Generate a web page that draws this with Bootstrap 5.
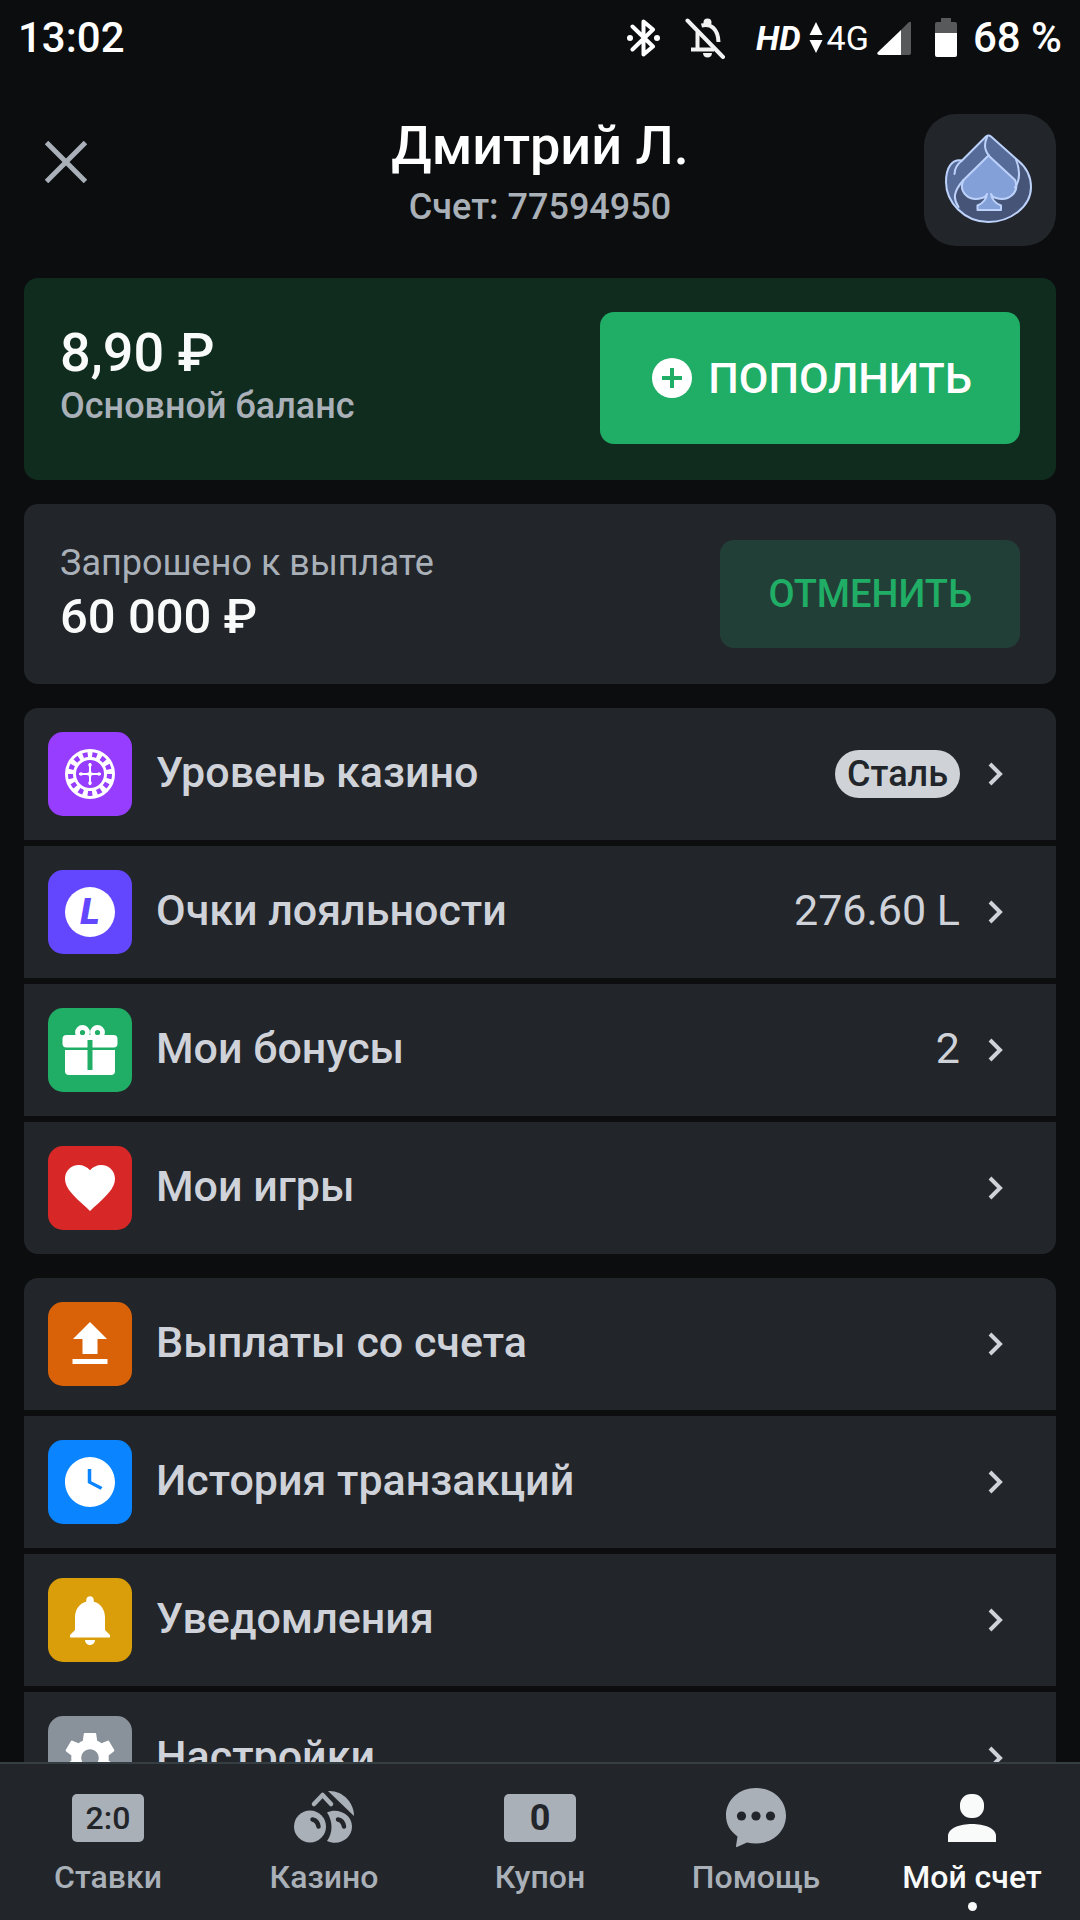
<!DOCTYPE html>
<html lang="ru" data-bs-theme="dark">
<head>
<meta charset="utf-8">
<meta name="viewport" content="width=device-width, initial-scale=1">
<title>Мой счет</title>
<link href="https://cdn.jsdelivr.net/npm/bootstrap@5.3.0/dist/css/bootstrap.min.css" rel="stylesheet">
<style>
  :root { --page: #0b0d0e; --panel: #22252a; --muted: #a9b0b8; --soft: #cfd3d9; --bright: #f9fbfa; --accent: #20ad65; }
  body { font-family: Roboto, "Noto Sans", sans-serif; background: var(--page); color: var(--bright); font-weight: 500; }
  svg { display: block; flex: none; }
  .text-dim { color: var(--muted); }
  .fs-title { font-size: 54px; line-height: 64px; }
  .fs-sum { font-size: 49px; line-height: 58px; }
  .fs-sub { font-size: 36px; line-height: 42px; }

  .status-bar { height: 76px; padding: 0 18px; font-size: 42px; line-height: 48px; color: #fff; }
  .status-small { font-size: 34px; line-height: 36px; }
  .status-net { margin-left: 30px; }

  .profile-head { padding: 38px 24px 32px; }
  .close-btn { width: 84px; height: 96px; }
  .side-slot { width: 132px; }
  .avatar-tile { width: 132px; height: 132px; border-radius: 32px; background: var(--panel); }

  .content-col { padding: 0 24px; gap: 24px; overflow-y: auto; scrollbar-width: none; min-height: 0; }
  .content-col::-webkit-scrollbar { display: none; }
  .content-col > * { flex: none; }
  .panel-card { background: var(--panel); border-radius: 14px; padding: 36px; }
  .panel-balance { background: #102c1f; padding-top: 34px; }
  .balance-text { padding-bottom: 8px; }
  .btn-deposit, .btn-cancel { border: 0; border-radius: 14px; font-weight: 500; padding: 0 48px; }
  .btn-deposit, .btn-deposit:hover { background: var(--accent); color: #fff; height: 132px; font-size: 43px; gap: 12px; }
  .btn-cancel, .btn-cancel:hover { background: #223f37; color: var(--accent); height: 108px; font-size: 38px; }

  .menu-list { gap: 6px; border-radius: 14px; overflow: hidden; }
  .menu-row { background: var(--panel); color: var(--soft); height: 132px; padding: 0 48px 0 24px; font-size: 43px; line-height: 48px; }
  .menu-row:hover { color: var(--soft); }
  .menu-icon { border-radius: 15px; margin-right: 24px; }
  .menu-label, .menu-value { padding-bottom: 4px; }
  .menu-value { font-weight: 400; }
  .level-pill { background: #cfd3d8; color: var(--panel); font-size: 36px; line-height: 48px; font-weight: 500; padding: 0 12px; border-radius: 24px; }
  .chev { margin-left: 24px; }
  .bg-violet { background: #963dff; } .bg-indigo { background: #6347ff; } .bg-green { background: #20ad65; } .bg-red { background: #d82727; }
  .bg-orange { background: #d96208; } .bg-azure { background: #0a84ff; } .bg-amber { background: #d99e0a; } .bg-steel { background: #89919a; }

  .tab-bar { background: var(--panel); border-top: 2px solid #353e42; padding-top: 24px; height: 158px; }
  .tab-link { color: var(--muted); font-size: 32px; line-height: 40px; flex: 1 1 0; }
  .tab-link.active { color: var(--bright); }
  .tab-pic { height: 60px; margin-bottom: 9px; }
  .tab-chip { width: 72px; height: 48px; border-radius: 5px; background: var(--muted); color: var(--panel); line-height: 48px; text-align: center; }
  .chip-score { font-size: 32px; }
  .chip-count { font-size: 36px; font-weight: 700; }
  .tab-dot { width: 9px; height: 9px; border-radius: 50%; background: var(--bright); margin-top: 5px; }
</style>
</head>
<body>
<div class="vh-100 d-flex flex-column overflow-hidden">
  <div class="status-bar d-flex align-items-center flex-shrink-0">
    <span class="me-auto">13:02</span>
    <svg class="me-4" width="33" height="38" viewBox="0 0 33 38" fill="none" stroke="#fff" stroke-width="4" stroke-linejoin="round" stroke-linecap="round"><path d="M5.500 7.500 26 27.500 16.500 35.500V2.500L26 10.500 5.500 30.500"/><circle cx="3" cy="19" r="3" fill="#fff" stroke="none"/><circle cx="30" cy="19" r="3" fill="#fff" stroke="none"/></svg>
    <svg width="42" height="42" viewBox="0 0 42 42" fill="none" stroke="#f2f2f2" stroke-width="4"><path d="M3.500 3.500 39 40" stroke-linecap="round"/><path d="M13.500 15v17.500M7 32.500h23M17.500 8.500C27 6 34 12 34.500 25"/><circle cx="23.500" cy="5.500" r="4" fill="#f2f2f2" stroke="none"/><path d="M19 36h9c0 6-9 6-9 0z" fill="#f2f2f2" stroke="none"/></svg>
    <span class="status-small status-net fst-italic fw-bold">HD</span>
    <svg class="ms-2" width="14" height="34" viewBox="0 0 14 34" fill="#fff"><path d="M7 1l6.500 13H.5zM.500 19h13L7 32z"/></svg>
    <span class="status-small fw-normal ms-1">4G</span>
    <svg class="ms-2" width="34" height="36" viewBox="0 0 34 36"><path d="M24 10 32 2q2-1 2 1v30q0 2-2 2h-8z" fill="#58595b"/><path d="M24 10v25H2q-3-1-1-3z" fill="#fff"/></svg>
    <svg class="ms-4" width="22" height="40" viewBox="0 0 22 40"><path d="M6 0h10v4h4q2 0 2 2v10H0V6q0-2 2-2h4z" fill="#58595b"/><path d="M0 15h22v22q0 2-2 2H2q-2 0-2-2z" fill="#fff"/></svg>
    <span class="ms-3">68 %</span>
  </div>

  <header class="profile-head d-flex align-items-start flex-shrink-0">
    <div class="side-slot">
      <button type="button" class="close-btn btn p-0 border-0 d-flex align-items-center justify-content-center" aria-label="Закрыть">
        <svg width="42" height="42" viewBox="0 0 42 42" stroke="#a9b0b8" stroke-width="5"><path d="M1.500 1.500l39 39M40.500 1.500l-39 39"/></svg>
      </button>
    </div>
    <div class="flex-grow-1 text-center">
      <h1 class="fs-title mb-2">Дмитрий Л.</h1>
      <div class="fs-sub text-dim">Счет: 77594950</div>
    </div>
    <a href="#" class="avatar-tile d-block" aria-label="Профиль">
      <svg width="132" height="132" viewBox="0 0 132 132" fill="none" stroke="#bdd2fb" stroke-width="2" stroke-linejoin="round" stroke-linecap="round">
        <path d="M62 22.500q2.500-2 5 0L94 46.500C103 54 107 64 107 73 107 93 86 108 64.500 108 40 108 22 88 22 68 22 53 28 45 38 46.500z" fill="#566b97" stroke="none"/>
        <path d="M37.500 67C30 78 30 85 34.500 93 42 103 53 108 64.500 108 86 108 107 93 107 73 107 62 101 52 92 46 96 57 97 64 91 73L64 60z" fill="#465577" stroke="none"/>
        <path d="M64.500 41.500 39.500 66C34 78 45 88 58 84q4-1 5-4-1 8-9.500 11.500V96H77v-4.500Q68 88 67 80q1 3 5 4c13 4 24-6 19-18z" fill="#84a0d8"/>
        <path d="M62 22.500q2.500-2 5 0L94 46.500C103 54 107 64 107 73 107 93 86 108 64.500 108 40 108 22 88 22 68 22 53 28 45 38 46.500Z"/>
        <path d="M39.500 66C29 78 29 85 34.500 93M63 23C59.500 31 61 37 65 41.500M92 45.500c4 10 5 19-1 28M30.500 60c0-6 3-10 7.500-13.500"/>
      </svg>
    </a>
  </header>

  <main class="content-col d-flex flex-column flex-grow-1">
    <section class="panel-card panel-balance d-flex align-items-center justify-content-between">
      <div class="balance-text">
        <div class="fs-title">8,90 ₽</div>
        <div class="fs-sub text-dim">Основной баланс</div>
      </div>
      <button type="button" class="btn btn-deposit d-flex align-items-center">
        <svg width="48" height="48" viewBox="0 0 48 48"><circle cx="24" cy="24" r="20" fill="#fff"/><path d="M24 14v20M14 24h20" stroke="#20ad65" stroke-width="4"/></svg>
        <span>ПОПОЛНИТЬ</span>
      </button>
    </section>

    <section class="panel-card d-flex align-items-center justify-content-between">
      <div>
        <div class="fs-sub fw-normal text-dim mb-1">Запрошено к выплате</div>
        <div class="fs-sum">60 000 ₽</div>
      </div>
      <button type="button" class="btn btn-cancel">ОТМЕНИТЬ</button>
    </section>

    <nav class="menu-list d-flex flex-column" aria-label="Казино">
      <a href="#" class="menu-row d-flex align-items-center text-decoration-none">
        <svg class="menu-icon bg-violet" width="84" height="84" viewBox="0 0 84 84" fill="none"><circle cx="42" cy="42" r="19.500" stroke="#fff" stroke-width="11"/><circle cx="42" cy="42" r="19.500" stroke="#963dff" stroke-width="5" pathLength="26" stroke-dasharray="1 1"/><path d="M42 31v22M31 42h22" stroke="#fff" stroke-width="2"/><path d="M42 36l1.500 4.500L48 42l-4.500 1.500L42 48l-1.500-4.500L36 42l4.500-1.500z" fill="#fff"/><g fill="#fff"><circle cx="42" cy="33" r="1.800"/><circle cx="42" cy="51" r="1.800"/><circle cx="33" cy="42" r="1.800"/><circle cx="51" cy="42" r="1.800"/></g></svg>
        <span class="menu-label flex-grow-1">Уровень казино</span>
        <span class="level-pill">Сталь</span>
        <svg class="chev" width="24" height="24" viewBox="0 0 24 24" fill="none" stroke="#cfd3d9" stroke-width="4"><path d="M6 2l10 10L6 22"/></svg>
      </a>
      <a href="#" class="menu-row d-flex align-items-center text-decoration-none">
        <svg class="menu-icon bg-indigo" width="84" height="84" viewBox="0 0 84 84"><circle cx="42" cy="42" r="25" fill="#fff"/><text x="42" y="54" text-anchor="middle" font-family="Roboto" font-size="37" font-weight="900" font-style="italic" fill="#6347ff">L</text></svg>
        <span class="menu-label flex-grow-1">Очки лояльности</span>
        <span class="menu-value">276.60 L</span>
        <svg class="chev" width="24" height="24" viewBox="0 0 24 24" fill="none" stroke="#cfd3d9" stroke-width="4"><path d="M6 2l10 10L6 22"/></svg>
      </a>
      <a href="#" class="menu-row d-flex align-items-center text-decoration-none">
        <svg class="menu-icon bg-green" width="84" height="84" viewBox="0 0 84 84"><g fill="#fff"><rect x="14.500" y="27" width="55" height="12.500" rx="4"/><path d="M17 42h50v21q0 4-4 4H21q-4 0-4-4z"/></g><g fill="none" stroke="#fff" stroke-width="4.800"><circle cx="34.500" cy="24.500" r="5"/><circle cx="49.500" cy="24.500" r="5"/></g><path d="M39.500 32h5v30h-5z" fill="#20ad65"/></svg>
        <span class="menu-label flex-grow-1">Мои бонусы</span>
        <span class="menu-value">2</span>
        <svg class="chev" width="24" height="24" viewBox="0 0 24 24" fill="none" stroke="#cfd3d9" stroke-width="4"><path d="M6 2l10 10L6 22"/></svg>
      </a>
      <a href="#" class="menu-row d-flex align-items-center text-decoration-none">
        <svg class="menu-icon bg-red" width="84" height="84" viewBox="0 0 84 84"><path transform="translate(12 11.500) scale(2.500)" fill="#fff" d="M12 21.350l-1.450-1.320C5.400 15.360 2 12.280 2 8.500 2 5.420 4.420 3 7.500 3c1.740 0 3.410.81 4.500 2.090C13.090 3.810 14.760 3 16.500 3 19.580 3 22 5.420 22 8.500c0 3.780-3.400 6.860-8.550 11.540L12 21.350z"/></svg>
        <span class="menu-label flex-grow-1">Мои игры</span>
        <svg class="chev" width="24" height="24" viewBox="0 0 24 24" fill="none" stroke="#cfd3d9" stroke-width="4"><path d="M6 2l10 10L6 22"/></svg>
      </a>
    </nav>

    <nav class="menu-list d-flex flex-column" aria-label="Счет">
      <a href="#" class="menu-row d-flex align-items-center text-decoration-none">
        <svg class="menu-icon bg-orange" width="84" height="84" viewBox="0 0 84 84"><path fill="#fff" d="M42 20l17 17h-9.500v15h-15V37H25zM24.500 57h35v5h-35z"/></svg>
        <span class="menu-label flex-grow-1">Выплаты со счета</span>
        <svg class="chev" width="24" height="24" viewBox="0 0 24 24" fill="none" stroke="#cfd3d9" stroke-width="4"><path d="M6 2l10 10L6 22"/></svg>
      </a>
      <a href="#" class="menu-row d-flex align-items-center text-decoration-none">
        <svg class="menu-icon bg-azure" width="84" height="84" viewBox="0 0 84 84"><path transform="translate(12 12) scale(2.500)" fill="#fff" d="M12 2C6.500 2 2 6.500 2 12s4.500 10 10 10 10-4.500 10-10S17.500 2 12 2zm4.250 13.100L11.100 12.400V6.800h1.400v4.900l4.500 2.300z"/></svg>
        <span class="menu-label flex-grow-1">История транзакций</span>
        <svg class="chev" width="24" height="24" viewBox="0 0 24 24" fill="none" stroke="#cfd3d9" stroke-width="4"><path d="M6 2l10 10L6 22"/></svg>
      </a>
      <a href="#" class="menu-row d-flex align-items-center text-decoration-none">
        <svg class="menu-icon bg-amber" width="84" height="84" viewBox="0 0 84 84"><path transform="translate(12 12) scale(2.500)" fill="#fff" d="M12 22c1.100 0 2-.9 2-2h-4c0 1.100.89 2 2 2zm6-6v-5c0-3.070-1.640-5.640-4.500-6.320V4c0-.83-.67-1.500-1.500-1.500s-1.500.67-1.500 1.500v.68C7.630 5.360 6 7.920 6 11v5l-2 2v1h16v-1l-2-2z"/></svg>
        <span class="menu-label flex-grow-1">Уведомления</span>
        <svg class="chev" width="24" height="24" viewBox="0 0 24 24" fill="none" stroke="#cfd3d9" stroke-width="4"><path d="M6 2l10 10L6 22"/></svg>
      </a>
      <a href="#" class="menu-row d-flex align-items-center text-decoration-none">
        <svg class="menu-icon bg-steel" width="84" height="84" viewBox="0 0 84 84"><path transform="translate(12 12) scale(2.500)" fill="#fff" d="M19.430 12.980c.04-.32.07-.64.07-.98s-.03-.66-.07-.98l2.110-1.650c.19-.15.24-.42.12-.64l-2-3.460c-.12-.22-.39-.3-.61-.22l-2.490 1c-.52-.4-1.080-.73-1.690-.98l-.38-2.650C14.460 2.180 14.250 2 14 2h-4c-.25 0-.46.18-.49.42l-.38 2.650c-.61.25-1.170.59-1.690.98l-2.490-1c-.23-.09-.49 0-.61.22l-2 3.460c-.13.22-.07.49.12.64l2.110 1.650c-.04.32-.07.65-.07.98s.03.66.07.98l-2.110 1.650c-.19.15-.24.42-.12.64l2 3.460c.12.22.39.3.61.22l2.490-1c.52.4 1.080.73 1.690.98l.38 2.650c.03.24.24.42.49.42h4c.25 0 .46-.18.49-.42l.38-2.650c.61-.25 1.170-.59 1.690-.98l2.490 1c.23.09.49 0 .61-.22l2-3.460c.12-.22.07-.49-.12-.64l-2.110-1.650zM12 15.500c-1.930 0-3.500-1.570-3.500-3.500s1.570-3.500 3.500-3.500 3.500 1.570 3.500 3.500-1.570 3.500-3.500 3.500z"/></svg>
        <span class="menu-label flex-grow-1">Настройки</span>
        <svg class="chev" width="24" height="24" viewBox="0 0 24 24" fill="none" stroke="#cfd3d9" stroke-width="4"><path d="M6 2l10 10L6 22"/></svg>
      </a>
    </nav>
  </main>

  <nav class="tab-bar d-flex flex-shrink-0" aria-label="Разделы">
    <a href="#" class="tab-link d-flex flex-column align-items-center text-decoration-none">
      <span class="tab-pic d-flex align-items-center"><span class="tab-chip chip-score">2:0</span></span>Ставки
    </a>
    <a href="#" class="tab-link d-flex flex-column align-items-center text-decoration-none">
      <span class="tab-pic d-flex"><svg width="60" height="60" viewBox="0 0 60 60" fill="#a9b0b8"><circle cx="16" cy="38.500" r="16"/><path d="M33 24.500c11-5 25 2 25 14s-13 20-25 14.500c6-8 6-20 0-28.500z"/><path d="M34 3c14-1 26 11 26 25z"/><path d="M20 16l8.600-9L37 16" fill="none" stroke="#a9b0b8" stroke-width="4.500" stroke-linecap="round" stroke-linejoin="round"/><path d="M18.500 31.500q5 1 6 7M44 31.500q5 1 6 7" fill="none" stroke="#22252a" stroke-width="4.500" stroke-linecap="round"/></svg></span>Казино
    </a>
    <a href="#" class="tab-link d-flex flex-column align-items-center text-decoration-none">
      <span class="tab-pic d-flex align-items-center"><span class="tab-chip chip-count">0</span></span>Купон
    </a>
    <a href="#" class="tab-link d-flex flex-column align-items-center text-decoration-none">
      <span class="tab-pic d-flex"><svg width="60" height="60" viewBox="0 0 60 60"><path fill="#a9b0b8" d="M30 0c17 0 30 12 30 27.500S47 55.500 30 55.500q-4.500 0-9-1L11 59q-1 .5-1-1l1.500-9.500C4 43 0 36 0 27.500 0 12 13 0 30 0z"/><g fill="#22252a"><circle cx="15.500" cy="28" r="4.600"/><circle cx="30" cy="28" r="4.600"/><circle cx="44.500" cy="28" r="4.600"/></g></svg></span>Помощь
    </a>
    <a href="#" class="tab-link active d-flex flex-column align-items-center text-decoration-none" aria-current="page">
      <span class="tab-pic d-flex align-items-center"><svg width="48" height="48" viewBox="0 0 48 48" fill="#f9fbfa"><rect x="12" y="0" width="24" height="24" rx="11"/><path d="M0 48v-6c0-8 12-12 24-12s24 4 24 12v6z"/></svg></span>Мой счет
      <span class="tab-dot"></span>
    </a>
  </nav>
</div>
<script src="https://cdn.jsdelivr.net/npm/bootstrap@5.3.0/dist/js/bootstrap.bundle.min.js"></script>
</body>
</html>
